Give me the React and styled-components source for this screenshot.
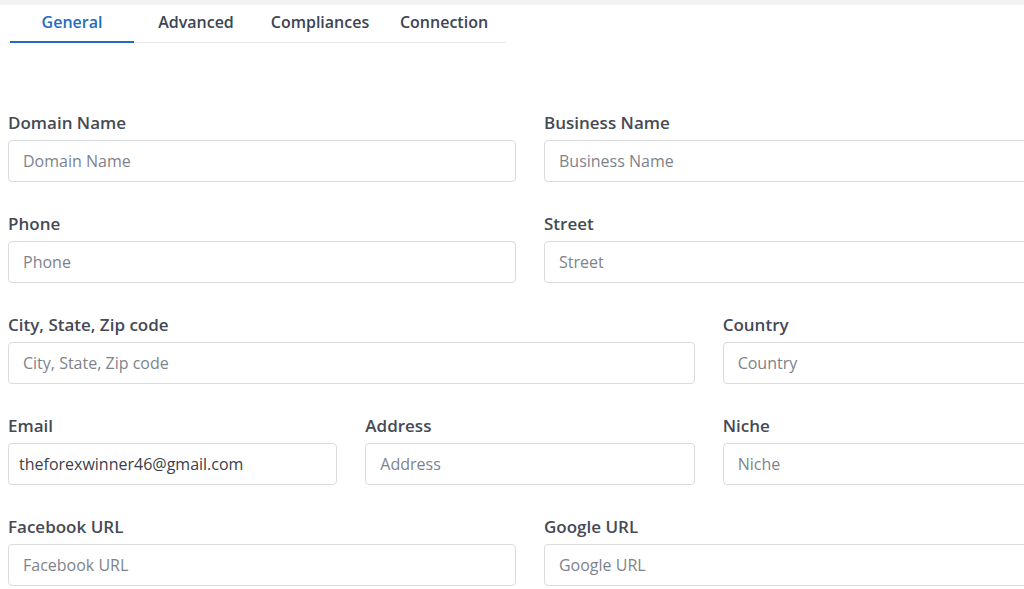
import React from "react";
import styled, { createGlobalStyle } from "styled-components";

const Global = createGlobalStyle`
  body { margin: 0; background: #fff; font-family: "Open Sans", "Noto Sans", sans-serif; overflow: hidden; }
`;
const Page = styled.div`
  border-top: 5px solid #f1f1f3;
  padding: 0 0 0 8px;
`;
const Tabs = styled.div`
  display: flex;
  margin-left: 2px;
  width: 496px;
  border-bottom: 1px solid #e6e8eb;
`;
const Tab = styled.div`
  width: 124px;
  height: 32px;
  padding-top: 4px;
  text-align: center;
  font-size: 16px;
  font-weight: 600;
  line-height: 26px;
  color: ${p => (p.$active ? "#1f6cc0" : "#3d4452")};
  border-bottom: 2px solid ${p => (p.$active ? "#1f6cc0" : "transparent")};
  margin-bottom: -1px;
`;
const Form = styled.div`
  display: grid;
  width: 1044px;
  grid-template-columns: repeat(12, 1fr);
  column-gap: 28px;
  row-gap: 30px;
  margin-top: 68px;
`;
const Field = styled.div`
  grid-column: span ${p => p.$span};
  display: flex;
  flex-direction: column;
`;
const Label = styled.label`
  font-size: 17px;
  font-weight: 600;
  color: #454a54;
  line-height: 24px;
  margin-bottom: 5px;
`;
const Input = styled.input`
  box-sizing: border-box;
  height: 42px;
  width: 100%;
  border: 1px solid #d9dbdf;
  border-radius: 4px;
  padding: 0 ${p => (p.$filled ? 10 : 14)}px;
  font-family: "Open Sans", sans-serif;
  font-size: 16px;
  color: #3c4048;
  &::placeholder { color: #7e838b; }
`;

const rows = [
  [["Domain Name", 6], ["Business Name", 6]],
  [["Phone", 6], ["Street", 6]],
  [["City, State, Zip code", 8], ["Country", 4]],
  [["Email", 4, "theforexwinner46@gmail.com"], ["Address", 4], ["Niche", 4]],
  [["Facebook URL", 6], ["Google URL", 6]],
];

export default function App() {
  return (
    <Page>
      <Global />
      <Tabs>
        <Tab $active>General</Tab>
        <Tab>Advanced</Tab>
        <Tab>Compliances</Tab>
        <Tab>Connection</Tab>
      </Tabs>
      <Form>
        {rows.flat().map(([l, s, v]) => (
          <Field key={l} $span={s}>
            <Label>{l}</Label>
            <Input placeholder={l} defaultValue={v} $filled={!!v} />
          </Field>
        ))}
      </Form>
    </Page>
  );
}
